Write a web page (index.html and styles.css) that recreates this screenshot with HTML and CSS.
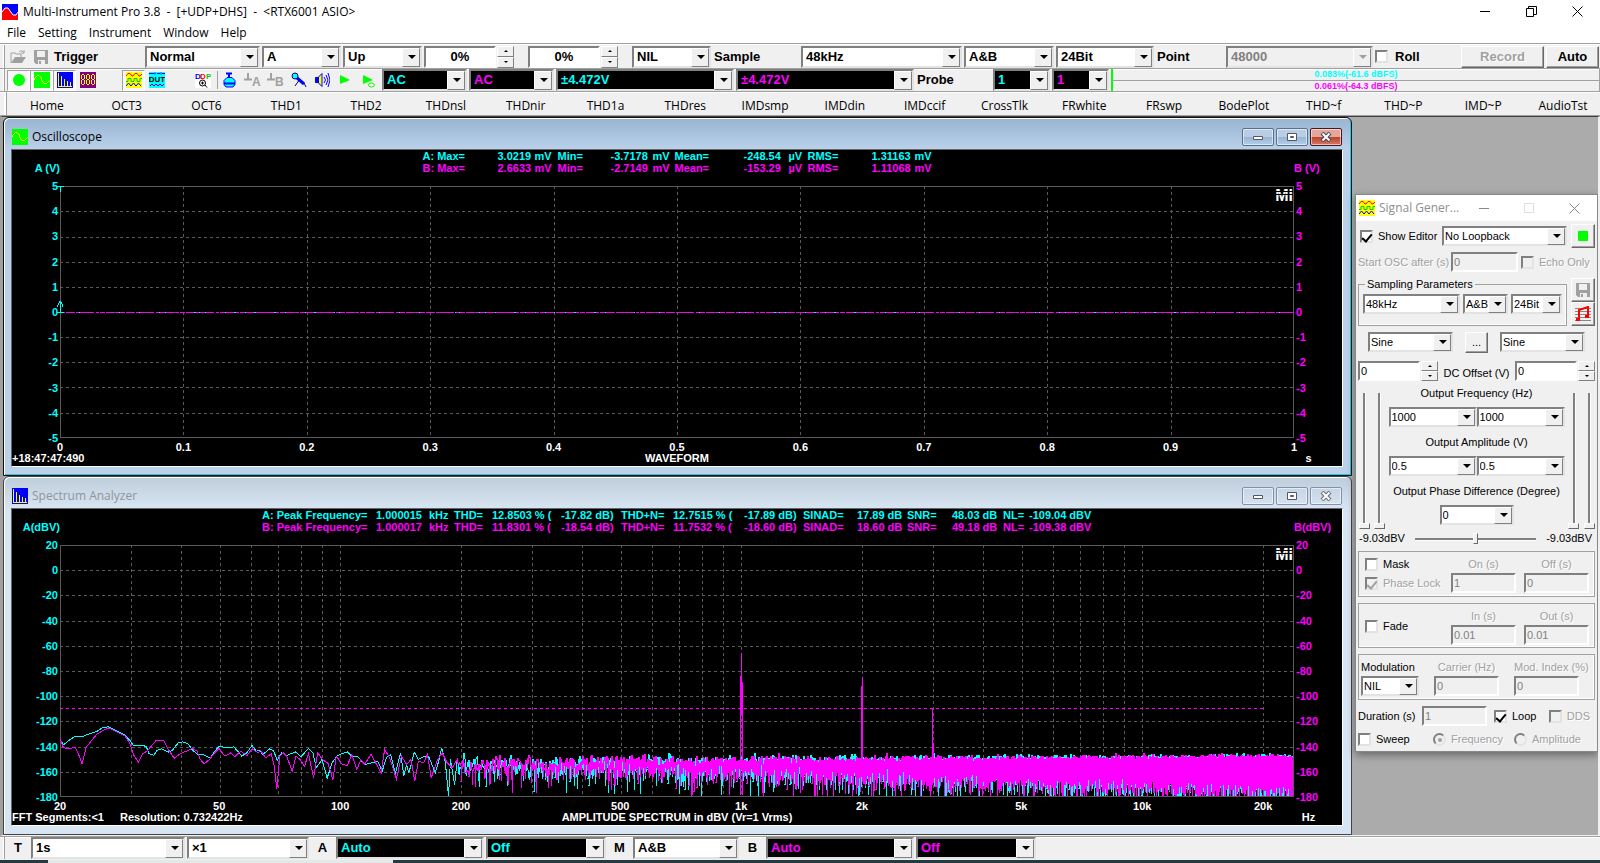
FILE: index.html
```html
<!DOCTYPE html>
<html lang="en">
<head>
<meta charset="utf-8">
<title>Multi-Instrument Pro 3.8</title>
<link rel="stylesheet" href="styles.css">
</head>
<body>
<svg width="0" height="0" class="defs" aria-hidden="true">
  <symbol id="i-scope" viewBox="0 0 16 16"><rect width="16" height="16" fill="#0f0"/><path d="M.5 8V6.500L3.500 3.500H5L7.500 6v2L10 11.500h2.500L15.500 8.500" fill="none" stroke="#ff0"/></symbol>
  <symbol id="i-spec" viewBox="0 0 16 16"><rect width="16" height="16" fill="#00f"/><path d="M1.500 1v13M4.500 4v10M7.500 7v7M10.500 9v5M13.500 10v4M1 14.500h14" stroke="#ff0"/></symbol>
  <symbol id="i-gen" viewBox="0 0 16 16"><rect width="16" height="16" fill="#ff0"/><path d="M0 4l2-2.500h2L6 4h1l2-2.500h2L13 4h1l2-2" fill="none" stroke="#f00"/><path d="M0 9.500h2v-3h3v3h3v-3h3v3h3v-3h2" fill="none" stroke="#0c0"/><path d="M0 14l2.500-3L5 14l2.500-3L10 14l2.500-3L15 14" fill="none" stroke="#00f"/></symbol>
  <symbol id="i-save" viewBox="0 0 16 16"><path d="M1 1h14v14H3l-2-2z" fill="#a0a0a0"/><path d="M4 2h8v6H4z" fill="#f0f0f0"/><path d="M5 11h7v4H5z" fill="#f0f0f0"/><path d="M6 12h2v3H6z" fill="#a0a0a0"/></symbol>
</svg>
<div class="app">
  <header class="titlebar">
    <svg width="16" height="16"><rect width="16" height="16" fill="#f00"/><path d="M0 0h16v10l-2 1h-3L8 7 6 4H3L0 7z" fill="#00f"/><path d="M0 8l3-4h3l5 7h3l2-3" fill="none" stroke="#fff" stroke-width="1"/></svg>
    <span class="caption">Multi-Instrument Pro 3.8 &nbsp;- &nbsp;[+UDP+DHS] &nbsp;- &nbsp;&lt;RTX6001 ASIO&gt;</span>
    <span class="syscmds">
      <button aria-label="Minimize"><svg width="11" height="11"><path d="M0 5.500h10" stroke="#000"/></svg></button>
      <button aria-label="Restore"><svg width="11" height="11" fill="none" stroke="#000"><path d="M.5 2.500h7v8h-7zM2.500 2V.5h8v8H8"/></svg></button>
      <button aria-label="Close"><svg width="11" height="11" stroke="#000"><path d="M.5.5l10 10M10.500.5l-10 10"/></svg></button>
    </span>
  </header>
  <nav class="menu"><button>File</button><button>Setting</button><button>Instrument</button><button>Window</button><button>Help</button></nav>

  <section class="bar row1">
    <i class="grip"></i>
    <button class="flat" aria-label="Open"><svg width="16" height="16"><path d="M1 14V4h4l1 1h5v3" fill="none" stroke="#a0a0a0"/><path d="M1 14l4-6h11l-4 6z" fill="#a0a0a0"/><path d="M9 3c2-2 4-1 5 1M14 1v3h-3" fill="none" stroke="#a0a0a0"/></svg></button>
    <button class="flat" aria-label="Save"><svg width="16" height="16"><use href="#i-save"/></svg></button>
    <span class="lbl w90l">Trigger</span>
    <span class="combo w115"><select aria-label="Trigger mode"><option>Normal</option></select></span>
    <span class="combo w79"><select aria-label="Trigger source"><option>A</option></select></span>
    <span class="combo w79"><select aria-label="Trigger edge"><option>Up</option></select></span>
    <span class="num"><input aria-label="Trigger level" value="0%"><span class="spin"><button aria-label="Up"></button><button aria-label="Down"></button></span></span>
    <span class="num second"><input aria-label="Trigger delay" value="0%"><span class="spin"><button aria-label="Up"></button><button aria-label="Down"></button></span></span>
    <span class="combo w79 gapped"><select aria-label="Filter"><option>NIL</option></select></span>
    <span class="lbl w86">Sample</span>
    <span class="combo w161"><select aria-label="Sample rate"><option>48kHz</option></select></span>
    <span class="combo w90"><select aria-label="Channels"><option>A&amp;B</option></select></span>
    <span class="combo w98"><select aria-label="Bits"><option>24Bit</option></select></span>
    <span class="lbl w68">Point</span>
    <span class="combo w147 off"><select aria-label="Points" disabled><option>48000</option></select></span>
    <label class="check roll"><input type="checkbox">Roll</label>
    <button class="push rec" disabled>Record</button>
    <button class="push auto">Auto</button>
  </section>

  <section class="bar row2">
    <i class="grip"></i>
    <span class="tools">
      <button class="tool on" aria-label="Run"><svg width="16" height="16"><circle cx="8" cy="8" r="6" fill="#0f0"/></svg></button>
      <button class="tool on" aria-label="Oscilloscope"><svg width="16" height="16"><use href="#i-scope"/></svg></button>
      <button class="tool on" aria-label="Spectrum Analyzer"><svg width="16" height="16"><use href="#i-spec"/></svg></button>
      <button class="tool" aria-label="Multimeter"><svg width="16" height="16"><rect width="16" height="16" fill="#800080"/><path d="M2 2.500h2M2 7.500h2M2 12.500h2M1.500 3v4M4.500 3v4M1.500 8v4M4.500 8v4M7 2.500h2M7 7.500h2M7 12.500h2M6.500 3v4M9.500 3v4M6.500 8v4M9.500 8v4M12 2.500h2M12 7.500h2M12 12.500h2M11.500 3v4M14.500 3v4M11.500 8v4M14.500 8v4" fill="none" stroke="#ff0"/></svg></button>
      <button class="tool on siggen" aria-label="Signal Generator"><svg width="16" height="16"><use href="#i-gen"/></svg></button>
      <button class="tool" aria-label="DUT"><svg width="16" height="16"><rect width="16" height="16" fill="#0ff"/><path d="M0 1.500h5M6 .5v2M8 1.500h3M12 .5v2M13 1.500h3M1 14l2-2 2 2 2-2 2 2 2-2 2 2 2-2" fill="none" stroke="#00f"/><text x="8" y="10" class="tiny" text-anchor="middle">DUT</text></svg></button>
      <button class="tool ddp" aria-label="DDP viewer"><svg width="16" height="16"><rect width="16" height="16" fill="#fff"/><text x="0" y="7" class="tiny" fill="#00f">D</text><text x="5" y="7" class="tiny" fill="#f00">D</text><text x="11" y="7" class="tiny" fill="#0c0">P</text><circle cx="7.500" cy="11" r="3" fill="none" stroke="#000"/><path d="M6 11h3M7.500 9.500v3M10 13l2 2.500" stroke="#000"/></svg></button>
      <i class="sep"></i>
      <button class="tool" aria-label="Calibrate"><svg width="16" height="16"><path d="M4 1.500h6M7 1v5" stroke="#00f" stroke-width="2"/><path d="M5 5.500h5l3 3v4l-2 2.500H4l-2-2.500v-4z" fill="#0ff" stroke="#00f"/><path d="M2 11.500h11" stroke="#00f" stroke-width="2"/></svg></button>
      <button class="tool" aria-label="Zero A"><svg width="18" height="16"><path d="M0 7.500h8M4 1v7" stroke="#a0a0a0" stroke-width="2"/><text x="8" y="14" class="mark">A</text></svg></button>
      <button class="tool" aria-label="Zero B"><svg width="18" height="16"><path d="M0 7.500h8M4 1v7" stroke="#a0a0a0" stroke-width="2"/><text x="8" y="14" class="mark">B</text></svg></button>
      <button class="tool" aria-label="Microphone"><svg width="16" height="16"><path d="M5 5l8 7" stroke="#00f" stroke-width="3"/><circle cx="4" cy="4" r="3" fill="#0ff" stroke="#008"/><path d="M9 7l-5 7M13 11l2 4" stroke="#008"/></svg></button>
      <button class="tool" aria-label="Speaker"><svg width="16" height="16"><path d="M1.500 5.500h3v5h-3z" fill="#00f" stroke="#00f"/><path d="M4.500 5L8 1.500v13L4.500 11z" fill="#ff0" stroke="#00f"/><path d="M10 5l1.500 3L10 11M12 3l2 5-2 5M14 1l2 7-2 7" fill="none" stroke="#00f"/></svg></button>
      <button class="tool" aria-label="Play"><svg width="16" height="16"><path d="M3 3l10 5-10 4z" fill="#0f0"/></svg></button>
      <button class="tool" aria-label="Play loop"><svg width="16" height="16"><path d="M3 3l10 5-10 4z" fill="#0f0"/><ellipse cx="11.500" cy="13" rx="3" ry="2" fill="#f0f0f0" stroke="#0f0"/></svg></button>
    </span>
    <span class="combo w85 dark a"><select aria-label="Coupling A"><option>AC</option></select></span>
    <span class="combo w85 dark b"><select aria-label="Coupling B"><option>AC</option></select></span>
    <span class="combo w178 dark a"><select aria-label="Range A"><option>±4.472V</option></select></span>
    <span class="combo w178 dark b"><select aria-label="Range B"><option>±4.472V</option></select></span>
    <span class="lbl w75">Probe</span>
    <span class="combo w57 dark a"><select aria-label="Probe A"><option>1</option></select></span>
    <span class="combo w57 dark b"><select aria-label="Probe B"><option>1</option></select></span>
    <span class="meters"><span class="a">0.083%(-61.6 dBFS)</span><span class="b">0.061%(-64.3 dBFS)</span></span>
  </section>

  <nav class="bar presets">
    <button>Home</button><button>OCT3</button><button>OCT6</button><button>THD1</button><button>THD2</button><button>THDnsl</button><button>THDnir</button><button>THD1a</button><button>THDres</button><button>IMDsmp</button><button>IMDdin</button><button>IMDccif</button><button>CrossTlk</button><button>FRwhite</button><button>FRswp</button><button>BodePlot</button><button>THD~f</button><button>THD~P</button><button>IMD~P</button><button>AudioTst</button>
  </nav>

  <main class="workspace">
    <div class="views">
      <section class="win active">
        <header><svg width="16" height="16"><use href="#i-scope"/></svg><h2>Oscilloscope</h2>
          <span class="winbtns"><button aria-label="Minimize"><svg width="12" height="10"><path d="M1.500 4.500h9v3h-9z" fill="#fff" stroke="#556"/></svg></button><button aria-label="Maximize"><svg width="12" height="10"><path d="M1.500 1.500h9v7h-9z" fill="#fff" stroke="#556"/><path d="M4.500 4.500h3v1h-3z" fill="none" stroke="#556"/></svg></button><button class="x" aria-label="Close"><svg width="12" height="10"><path d="M2 1l8 8M10 1L2 9" stroke="#445" stroke-width="4"/><path d="M2.500 1.500l7 7M9.500 1.500l-7 7" stroke="#fff" stroke-width="2"/></svg></button></span></header>
        <div class="screen">
          <div class="top"><span class="unit a">A (V)</span>
            <div class="stats osc">
              <div class="a"><span>A: Max=</span><span>3.0219</span><span>mV</span><span>Min=</span><span>-3.7178</span><span>mV</span><span>Mean=</span><span>-248.54</span><span>µV</span><span>RMS=</span><span>1.31163</span><span>mV</span></div>
              <div class="b"><span>B: Max=</span><span>2.6633</span><span>mV</span><span>Min=</span><span>-2.7149</span><span>mV</span><span>Mean=</span><span>-153.29</span><span>µV</span><span>RMS=</span><span>1.11068</span><span>mV</span></div>
            </div><span class="unit b">B (V)</span></div>
          <div class="yaxis a"><span>5</span><span>4</span><span>3</span><span>2</span><span>1</span><span>0</span><span>-1</span><span>-2</span><span>-3</span><span>-4</span><span>-5</span></div>
          <div class="plot"><svg id="osc" viewBox="0 0 1234 253" preserveAspectRatio="none"></svg><b class="brand">MI</b></div>
          <div class="yaxis b"><span>5</span><span>4</span><span>3</span><span>2</span><span>1</span><span>0</span><span>-1</span><span>-2</span><span>-3</span><span>-4</span><span>-5</span></div>
          <div class="xaxis" data-ticks="0:0 0.1:10 0.2:20 0.3:30 0.4:40 0.5:50 0.6:60 0.7:70 0.8:80 0.9:90 1:100"></div>
          <div class="foot"><span>+18:47:47:490</span><span>WAVEFORM</span><span class="xunit">s</span></div>
        </div>
      </section>
      <section class="win">
        <header><svg width="16" height="16"><use href="#i-spec"/></svg><h2>Spectrum Analyzer</h2>
          <span class="winbtns"><button aria-label="Minimize"><svg width="12" height="10"><path d="M1.500 4.500h9v3h-9z" fill="#fff" stroke="#556"/></svg></button><button aria-label="Maximize"><svg width="12" height="10"><path d="M1.500 1.500h9v7h-9z" fill="#fff" stroke="#556"/><path d="M4.500 4.500h3v1h-3z" fill="none" stroke="#556"/></svg></button><button aria-label="Close"><svg width="12" height="10"><path d="M2 1l8 8M10 1L2 9" stroke="#667" stroke-width="4"/><path d="M2.500 1.500l7 7M9.500 1.500l-7 7" stroke="#fff" stroke-width="2"/></svg></button></span></header>
        <div class="screen">
          <div class="top"><span class="unit a">A(dBV)</span>
            <div class="stats spec">
              <div class="a"><span>A: Peak Frequency=</span><span>1.000015</span><span>kHz</span><span>THD=</span><span>12.8503 % (</span><span>-17.82 dB)</span><span>THD+N=</span><span>12.7515 % (</span><span>-17.89 dB)</span><span>SINAD=</span><span>17.89 dB</span><span>SNR=</span><span>48.03 dB</span><span>NL=</span><span>-109.04 dBV</span></div>
              <div class="b"><span>B: Peak Frequency=</span><span>1.000017</span><span>kHz</span><span>THD=</span><span>11.8301 % (</span><span>-18.54 dB)</span><span>THD+N=</span><span>11.7532 % (</span><span>-18.60 dB)</span><span>SINAD=</span><span>18.60 dB</span><span>SNR=</span><span>49.18 dB</span><span>NL=</span><span>-109.38 dBV</span></div>
            </div><span class="unit b">B(dBV)</span></div>
          <div class="yaxis a"><span>20</span><span>0</span><span>-20</span><span>-40</span><span>-60</span><span>-80</span><span>-100</span><span>-120</span><span>-140</span><span>-160</span><span>-180</span></div>
          <div class="plot"><svg id="spec" viewBox="0 0 1234 252" preserveAspectRatio="none"></svg><b class="brand">MI</b></div>
          <div class="yaxis b"><span>20</span><span>0</span><span>-20</span><span>-40</span><span>-60</span><span>-80</span><span>-100</span><span>-120</span><span>-140</span><span>-160</span><span>-180</span></div>
          <div class="xaxis" data-ticks="20:0 50:12.9 100:22.7 200:32.5 500:45.4 1k:55.2 2k:65 5k:77.9 10k:87.7 20k:97.5"></div>
          <div class="foot"><span class="two"><span>FFT Segments:&lt;1</span><span>Resolution: 0.732422Hz</span></span><span>AMPLITUDE SPECTRUM in dBV (Vr=1 Vrms)</span><span class="xunit">Hz</span></div>
        </div>
      </section>
    </div>

    <aside class="gen-win">
      <header><svg width="16" height="16"><use href="#i-gen"/></svg><span class="name">Signal Gener...</span>
        <button aria-label="Minimize"><svg width="11" height="11"><path d="M0 5.500h10" stroke="#888"/></svg></button><button aria-label="Maximize" disabled><svg width="11" height="11"><path d="M.5.5h9v9h-9z" fill="none" stroke="#ddd"/></svg></button><button aria-label="Close"><svg width="11" height="11" stroke="#888"><path d="M.5.5l10 10M10.500.5l-10 10"/></svg></button></header>
      <form class="gen">
        <div class="g-top">
          <label class="check"><input type="checkbox" checked>Show Editor</label>
          <span class="combo grow"><select aria-label="Loopback"><option>No Loopback</option></select></span>
          <button type="button" class="sq" aria-label="Run generator"><svg width="12" height="12"><rect x="1" y="1" width="10" height="10" fill="#0f0"/></svg></button>
        </div>
        <div class="g-start"><label for="start" class="dis">Start OSC after (s)</label><input id="start" class="field w67" value="0" disabled><label class="check dis"><input type="checkbox" disabled>Echo Only</label></div>
        <div class="g-samp">
          <fieldset><legend>Sampling Parameters</legend><span class="combo grow"><select aria-label="Rate"><option>48kHz</option></select></span><span class="combo w45"><select aria-label="Channel"><option>A&amp;B</option></select></span><span class="combo w51"><select aria-label="Bit depth"><option>24Bit</option></select></span></fieldset>
          <span class="pair"><button type="button" class="sq" aria-label="Save" disabled><svg width="16" height="16"><use href="#i-save"/></svg></button><button type="button" class="sq" aria-label="Score"><svg width="16" height="16"><path d="M0 2.500h16M0 5.500h16M0 8.500h16M0 11.500h16M0 14.500h16" stroke="#888"/><path d="M4 13V4l9-3v9" fill="none" stroke="#f00" stroke-width="2"/><path d="M1 12h4v3H1zM10 9h4v3h-4z" fill="#f00"/></svg></button></span>
        </div>
        <div class="g-wave"><span class="combo w85"><select aria-label="Waveform A"><option>Sine</option></select></span><button type="button" class="push dots">...</button><span class="combo w85"><select aria-label="Waveform B"><option>Sine</option></select></span></div>
        <div class="g-dc"><input class="field" aria-label="DC Offset A" value="0"><span class="spin"><button type="button" aria-label="Up"></button><button type="button" aria-label="Down"></button></span><span class="mid">DC Offset (V)</span><input class="field" aria-label="DC Offset B" value="0"><span class="spin"><button type="button" aria-label="Up"></button><button type="button" aria-label="Down"></button></span></div>
        <div class="g-out">
          <input type="range" class="vert" aria-label="Amplitude A coarse" value="0"><input type="range" class="vert" aria-label="Amplitude A fine" value="0">
          <div class="out-mid">
            <span>Output Frequency (Hz)</span>
            <div><span class="combo"><select aria-label="Frequency A"><option>1000</option></select></span><span class="combo"><select aria-label="Frequency B"><option>1000</option></select></span></div>
            <span>Output Amplitude (V)</span>
            <div><span class="combo"><select aria-label="Amplitude A"><option>0.5</option></select></span><span class="combo"><select aria-label="Amplitude B"><option>0.5</option></select></span></div>
            <span>Output Phase Difference (Degree)</span>
            <div><span class="combo w74"><select aria-label="Phase"><option>0</option></select></span></div>
          </div>
          <input type="range" class="vert" aria-label="Amplitude B fine" value="0"><input type="range" class="vert" aria-label="Amplitude B coarse" value="0">
        </div>
        <div class="g-bal"><span>-9.03dBV</span><input type="range" class="horz" aria-label="Balance" value="50"><span>-9.03dBV</span></div>
        <div class="box g3">
          <label class="check"><input type="checkbox">Mask</label><label for="on" class="dis">On (s)</label><label for="offs" class="dis">Off (s)</label>
          <label class="check dis"><input type="checkbox" checked disabled>Phase Lock</label><input id="on" class="field" value="1" disabled><input id="offs" class="field" value="0" disabled>
        </div>
        <div class="box g3 fade">
          <label class="check"><input type="checkbox">Fade</label><label for="fin" class="dis">In (s)</label><label for="fout" class="dis">Out (s)</label>
          <input id="fin" class="field" value="0.01" disabled><input id="fout" class="field" value="0.01" disabled>
        </div>
        <div class="box g3 mod">
          <label for="mod">Modulation</label><label for="car" class="dis">Carrier (Hz)</label><label for="idx" class="dis">Mod. Index (%)</label>
          <span class="combo"><select id="mod"><option>NIL</option></select></span><input id="car" class="field" value="0" disabled><input id="idx" class="field" value="0" disabled>
        </div>
        <div class="g-dur"><label for="dur">Duration (s)</label><input id="dur" class="field w65" value="1" disabled><label class="check"><input type="checkbox" checked>Loop</label><label class="check dis"><input type="checkbox" disabled>DDS</label></div>
        <div class="g-sweep"><label class="check"><input type="checkbox">Sweep</label><label class="check dis"><input type="radio" name="sw" checked disabled>Frequency</label><label class="check dis"><input type="radio" name="sw" disabled>Amplitude</label></div>
      </form>
    </aside>
  </main>

  <section class="bar bottom">
    <i class="grip"></i>
    <span class="lbl w25">T</span><span class="combo w154"><select aria-label="Sweep time"><option>1s</option></select></span><span class="combo w122"><select aria-label="Time multiplier"><option>×1</option></select></span>
    <span class="lbl w22">A</span><span class="combo w148 dark a"><select aria-label="Scale A"><option>Auto</option></select></span><span class="combo w120 dark a"><select aria-label="Offset A"><option>Off</option></select></span>
    <span class="lbl w22">M</span><span class="combo w106"><select aria-label="View mode"><option>A&amp;B</option></select></span>
    <span class="lbl w22">B</span><span class="combo w148 dark b"><select aria-label="Scale B"><option>Auto</option></select></span><span class="combo w120 dark b"><select aria-label="Offset B"><option>Off</option></select></span>
  </section>
  <div class="desk"><i></i></div>
</div>
<script src="app.js"></script>
</body>
</html>
```
FILE: styles.css
```css
* { box-sizing: border-box; }
body { margin: 0; background: #f0f0f0; color: #000; font: 11px/13px "Liberation Sans", Arial, sans-serif; }
button, input, select { font: inherit; color: inherit; margin: 0; padding: 0; border-radius: 0; }
button { border: 0; background: none; display: flex; align-items: center; justify-content: center; flex: none; }
svg { display: block; flex: none; }
h2 { margin: 0; font-weight: 400; }
.defs { position: absolute; }
.a { color: #0ff; }
.b { color: #f0f; }
.app { height: 100vh; display: flex; flex-direction: column; overflow: hidden; }

.titlebar { height: 23px; flex: none; background: #fff; display: flex; align-items: center; padding-left: 2px; gap: 5px; font: 12px/16px "Open Sans", "Noto Sans", sans-serif; }
.syscmds { margin-left: auto; display: flex; }
.syscmds button { width: 46px; height: 20px; }
.menu { height: 20px; flex: none; background: #fff; display: flex; padding-left: 7px; gap: 12px; font: 12px/18px "Open Sans", "Noto Sans", sans-serif; }

.bar { display: flex; align-items: center; background: #f0f0f0; border-top: 1px solid #a0a0a0; box-shadow: inset 0 1px #fff; gap: 2px; font-weight: 700; font-size: 13px; line-height: 16px; flex: none; padding-left: 3px; }
.row1 { height: 25px; padding-top: 1px; }
.row2 { height: 23px; }
.grip { width: 2px; align-self: stretch; border-right: 1px solid #a0a0a0; background: #fff; flex: none; }
.lbl { padding-left: 1px; flex: none; }
.flat { width: 21px; height: 20px; }
.w90l { width: 90px; } .w115 { width: 115px; } .w79 { width: 79px; } .w86 { width: 86px; } .w161 { width: 161px; }
.w90 { width: 90px; } .w98 { width: 98px; } .w68 { width: 68px; } .w147 { width: 147px; } .w85 { width: 85px; }
.w178 { width: 178px; } .w75 { width: 75px; } .w57 { width: 57px; } .w25 { width: 22px; } .w22 { width: 23px; }
.w154 { width: 154px; } .w122 { width: 122px; } .w148 { width: 148px; } .w120 { width: 120px; } .w106 { width: 106px; }
.w67 { width: 67px; } .w65 { width: 65px; } .w45 { width: 45px; } .w51 { width: 51px; } .w74 { width: 74px; }

.combo { position: relative; display: flex; flex: none; height: 22px; }
.combo select { appearance: none; width: 100%; border: 2px solid; border-color: #808080 #e3e3e3 #e3e3e3 #808080; background: #fff; padding-left: 3px; opacity: 1; color: #000; }
.combo::after { content: ""; position: absolute; right: 2px; top: 2px; bottom: 1px; width: 16px; background: #f0f0f0; border: 1px solid; border-color: #fff #808080 #808080 #fff; pointer-events: none; }
.combo::before { content: ""; position: absolute; z-index: 1; right: 6px; top: calc(50% - 2px); border: 4px solid transparent; border-top-color: #000; border-bottom: 0; pointer-events: none; }
.dark select { background: #000; }
.dark.a select { color: #0ff; }
.dark.b select { color: #f0f; }
.off select { background: #f0f0f0; color: #808080; }
.off::before { border-top-color: #a0a0a0; }
.num { display: flex; width: 90px; flex: none; height: 22px; gap: 1px; }
.num.second { margin-left: 12px; }
.gapped { margin-left: 12px; }
.num input { width: 72px; border: 2px solid; border-color: #808080 #fff #fff #808080; background: #fff; text-align: center; font-weight: 700; }
.spin { width: 17px; display: flex; flex-direction: column; flex: none; }
.spin button { flex: 1; border: 1px solid; border-color: #fff #808080 #808080 #fff; background: #f0f0f0; }
.spin button::before { content: ""; border: 2px solid transparent; border-top: 0; border-bottom-color: #000; }
.spin button:last-child::before { border: 2px solid transparent; border-bottom: 0; border-top-color: #000; }
.push { background: #f0f0f0; border: 1px solid; border-color: #fff #696969 #696969 #fff; box-shadow: inset -1px -1px #a0a0a0; }
.push:disabled { color: #a0a0a0; text-shadow: 1px 1px #fff; }
.rec { width: 83px; height: 22px; margin-left: auto; }
.auto { width: 53px; height: 22px; margin-right: 1px; }
.check { display: flex; align-items: center; gap: 7px; white-space: nowrap; }
.check input { appearance: none; width: 13px; height: 13px; flex: none; background: #fff; border: 2px solid; border-color: #808080 #e3e3e3 #e3e3e3 #808080; display: grid; place-items: center; }
.check input[type=checkbox]:checked::before { content: ""; width: 4px; height: 8px; border: solid #000; border-width: 0 2px 2px 0; transform: rotate(40deg); }
.check input:disabled { background: #f0f0f0; }
.check input[type=checkbox]:disabled::before { border-color: #a0a0a0; }
.check input[type=radio] { border-radius: 50%; }
.check input[type=radio]:checked::before { content: ""; width: 4px; height: 4px; border-radius: 50%; background: #a0a0a0; }

.tools { display: flex; align-items: center; width: 373px; flex: none; }
.tool { width: 23px; height: 21px; }
.tool.on { background: #f8f8f8; border: 1px solid; border-color: #a0a0a0 #fff #fff #a0a0a0; }
.siggen, .ddp { margin-left: 23px; }
.sep { width: 1px; height: 18px; background: #a0a0a0; margin: 0 0 0 3px; flex: none; }
.tiny { font: 700 8px "Liberation Sans", sans-serif; }
.mark { font: 700 12px "Liberation Sans", sans-serif; fill: #a0a0a0; }
.meters { flex: 1; display: grid; grid-template-rows: 11px 11px; font-size: 9px; line-height: 10px; text-align: center; border-right: 1px solid #a0a0a0; }
.meters span { border-left: 2px solid #0f0; }
.meters .b { border-top: 1px solid #a0a0a0; }
.presets { height: 25px; gap: 0; padding-left: 4px; font: 12px/16px "Open Sans", "Noto Sans", sans-serif; border-bottom: 1px solid #a0a0a0; }
.presets button { width: 5%; min-width: 0; padding-top: 4px; }
.presets::before { content: ""; width: 2px; align-self: stretch; border-right: 1px solid #a0a0a0; background: #fff; flex: none; }

.workspace { flex: 1; min-height: 0; background: #ababab; border: solid; border-width: 1px 2px 1px 3px; border-color: #404040 #f0f0f0 #f0f0f0 #a0a0a0; display: flex; align-items: flex-start; gap: 3px; overflow: hidden; }
.views { flex: 1; min-width: 0; height: 100%; display: flex; flex-direction: column; }
.win { flex: 1; min-height: 0; display: flex; flex-direction: column; border: 1px solid #444; border-radius: 6px 6px 0 0; padding: 0 8px 8px 7px; background: linear-gradient(#bfcddb, #d7e4f2 31px); box-shadow: inset 1px 1px #fff; }
.win.active { background: linear-gradient(#99b4d1, #b9d1ea 31px); border-color: #111; box-shadow: inset 1px 1px #fff, inset -1px -1px #20c8e8; }
.win > header { height: 31px; flex: none; display: flex; align-items: center; gap: 4px; padding: 6px 1px 0; font: 12px/16px "Open Sans", "Noto Sans", sans-serif; color: #8e959c; }
.win.active > header { color: #000; }
.win h2 { font-size: 12px; }
.winbtns { margin-left: auto; display: flex; gap: 2px; }
.winbtns button { width: 32px; height: 18px; border: 1px solid #8390b0; border-radius: 2px; box-shadow: inset 0 0 0 1px #ffffff88; }
.active .winbtns button { background: linear-gradient(#b9cde4 50%, #98b4d3 50%, #b5cfe9); border-color: #5a7090; }
.active .winbtns .x { background: linear-gradient(#e3a79c 48%, #bf4026 50%, #d27a68); border-color: #4c1621; }
.screen { flex: 1; min-height: 0; background: #000; color: #fff; border: 1px solid; border-color: #666 #fff #fff #666; display: grid; grid-template: 36px minmax(0, 1fr) 14px 14px / 48px minmax(0, 1fr) 48px; font-weight: 700; font-size: 11px; line-height: 12px; }
.top { grid-column: 1 / -1; display: grid; grid-template-columns: 48px 1fr 48px; white-space: nowrap; }
.unit { padding-top: 12px; }
.unit.a { justify-self: end; }
.stats > div { display: grid; justify-content: center; }
.osc > div { grid-template-columns: 75px 37px 23px 53px 42px 22px 69px 45px 19px 64px 43px 17px; }
.spec > div { grid-template-columns: 114px 53px 25px 38px 69px 60px 52px 71px 59px 54px 50px 45px 51px 26px 63px; }
.yaxis { display: flex; flex-direction: column; justify-content: space-between; margin: -6px 2px; text-align: right; }
.yaxis.b { text-align: left; }
.plot { position: relative; min-width: 0; min-height: 0; }
.plot svg { width: 100%; height: 100%; overflow: visible; }
.plot path { fill: none; vector-effect: non-scaling-stroke; shape-rendering: crispEdges; }
.brand { position: absolute; right: 1px; top: 3px; font-size: 16px; line-height: 14px; }
.brand::after { content: ""; position: absolute; inset: 0; background: repeating-linear-gradient(transparent 0 2px, #000 2px 3px); background-size: 100% 8px; background-repeat: no-repeat; }
.xaxis { grid-column: 2; position: relative; }
.xaxis span { position: absolute; top: 3px; width: 40px; margin-left: -20px; text-align: center; }
.foot { grid-column: 1 / -1; display: grid; grid-template-columns: 1fr auto 1fr; white-space: nowrap; }
.two { display: flex; gap: 16px; }
.xunit { justify-self: end; width: 66px; text-align: center; padding-right: 1px; }

.gen-win { width: 243px; flex: none; margin-top: 77px; background: #f0f0f0; border: 1px solid #888; box-shadow: 0 3px 8px #0006; }
.gen-win > header { height: 26px; background: #fff; color: #8e8e8e; display: flex; align-items: center; padding-left: 3px; font: 12px/16px "Open Sans", "Noto Sans", sans-serif; }
.name { flex: 1; padding-left: 4px; white-space: nowrap; }
.gen-win > header button { width: 45px; height: 24px; }
.gen { padding: 3px 2px 5px; display: flex; flex-direction: column; }
.gen .combo { height: 20px; }
.gen .combo select { padding-left: 1px; }
.gen .push { color: #000; }
.field { height: 20px; min-width: 0; border: 2px solid; border-color: #808080 #fff #fff #808080; background: #fff; padding-left: 1px; }
.field:disabled { background: #f0f0f0; color: #808080; }
.dis { color: #a0a0a0; text-shadow: 1px 1px #fff; }
.gen .grow { flex: 1; }
.sq { width: 24px; height: 24px; border: 1px solid; border-color: #fff #696969 #696969 #fff; box-shadow: inset -1px -1px #a0a0a0; }
.g-top { display: flex; align-items: center; gap: 4px; padding-left: 2px; }
.g-top .check { width: 78px; gap: 5px; }
.g-start { display: flex; align-items: center; margin-top: 4px; gap: 3px; white-space: nowrap; }
.g-start > label:first-child { width: 90px; }
.g-start .check { gap: 5px; }
.g-samp { display: flex; gap: 4px; margin-top: 6px; }
.g-samp fieldset { flex: 1; min-width: 0; display: flex; gap: 3px; margin: 0; padding: 3px 4px 5px; border: 1px solid #a0a0a0; box-shadow: inset -1px -1px #fff; }
.g-samp legend { padding: 0 2px; margin-left: 2px; }
.g-wave { display: flex; justify-content: space-between; padding: 0 10px; margin-top: 6px; }
.dots { width: 23px; height: 21px; }
.g-dc { display: grid; grid-template-columns: 62px 17px 1fr 62px 17px; gap: 1px; margin-top: 8px; text-align: center; line-height: 24px; }
.g-dc .spin { height: 20px; }
.g-out { display: flex; justify-content: space-between; margin-top: 2px; }
.out-mid { display: flex; flex-direction: column; align-items: center; width: 176px; height: 142px; }
.out-mid > span { margin-bottom: 7px; }
.out-mid div { display: flex; justify-content: center; width: 100%; margin-bottom: 9px; }
.out-mid .combo { flex: 1; }
.out-mid .w74 { flex: none; }
.vert { appearance: none; writing-mode: vertical-lr; direction: rtl; width: 12px; height: 136px; margin-top: 6px; background: linear-gradient(90deg, transparent 5px, #808080 5px 7px, #fff 7px 8px, transparent 8px); }
.vert::-webkit-slider-thumb { appearance: none; width: 11px; height: 6px; background: #f0f0f0; border: 1px solid; border-color: #fff #696969 #696969 #fff; }
.horz { appearance: none; width: 121px; height: 12px; background: linear-gradient(transparent 5px, #808080 5px 7px, #fff 7px 8px, transparent 8px); }
.horz::-webkit-slider-thumb { appearance: none; width: 5px; height: 11px; background: #f0f0f0; border: 1px solid; border-color: #fff #696969 #696969 #fff; }
.g-bal { display: flex; align-items: center; justify-content: space-between; margin-top: 3px; padding: 0 3px 0 1px; }
.box { border: 1px solid #a0a0a0; box-shadow: inset -1px -1px #fff; margin-top: 6px; padding: 3px 6px 3px; }
.g3 { display: grid; grid-template: 18px 20px / 78px 65px 65px; column-gap: 8px; align-items: center; height: 46px; }
.g3 > .dis:not(.check) { text-align: center; }
.g3 .check { gap: 5px; }
.g3.fade { height: 45px; }
.fade .check { grid-row: 1 / 3; }
.mod { grid-template-columns: 58px 65px 72px; column-gap: 15px; padding-left: 2px; }
.mod label { white-space: nowrap; }
.mod .field:last-child { width: 65px; }
.g-dur { display: flex; align-items: center; margin-top: 6px; }
.g-dur > label:first-child { width: 64px; }
.g-dur .check { margin-left: 7px; gap: 5px; }
.g-dur .check:last-child { margin-left: auto; padding-right: 5px; }
.g-sweep { display: grid; grid-template-columns: 75px 81px 1fr; margin-top: 7px; }
.g-sweep .check { gap: 5px; }

.bottom { height: 24px; padding-bottom: 1px; }
.bottom .lbl { text-align: center; padding-left: 0; }
.desk { height: 3px; background: #253a40; padding-left: 48px; flex: none; }
.desk i { display: block; width: 345px; height: 3px; background: #e4e8e8; }
```
FILE: app.js
```js
const NS = 'http://www.w3.org/2000/svg';
function draw(svg, d, stroke, dash) {
  const p = document.createElementNS(NS, 'path');
  p.setAttribute('d', d);
  p.setAttribute('stroke', stroke);
  if (dash) p.setAttribute('stroke-dasharray', dash);
  svg.appendChild(p);
}
document.querySelectorAll('.xaxis').forEach(axis => {
  axis.dataset.ticks.split(' ').forEach(t => {
    const [label, left] = t.split(':');
    const s = document.createElement('span');
    s.textContent = label;
    s.style.left = left + '%';
    axis.appendChild(s);
  });
});
const GRID = '#5a5a5a';
const W = 1234;

const osc = document.getElementById('osc');
for (let i = 1; i < 10; i++) {
  draw(osc, `M0 ${Math.round(i * 25.3)}.5H${W}`, GRID, '3 3');
  draw(osc, `M${Math.round(i * 123.4)}.5 0V253`, GRID, '3 3');
}
draw(osc, `M.5 .5H${W - 0.5}V252.5H.5Z`, GRID);
draw(osc, `M0 126.5H${W}`, '#0ff', '2 9 3 4 6 5');
draw(osc, `M0 126.5H${W}`, '#f0f', '5 1 8 2 3 1');
draw(osc, 'M-3 .5H4M.5 0V6M-3 126.5H4M.5 126V115M.5 115L-3 121M.5 115L3 121', '#0ff');

const spec = document.getElementById('spec');
const DEC = 401;
const fx = f => DEC * Math.log10(f / 20);
const dy = db => Math.min(251, (20 - db) * 1.26);
for (let i = 1; i < 10; i++) draw(spec, `M0 ${Math.round(i * 25.2)}.5H${W}`, GRID, '3 3');
for (const dec of [10, 100, 1000, 10000]) {
  for (let m = 1; m < 10; m++) {
    const f = dec * m;
    if (f > 20 && f <= 20000) draw(spec, `M${Math.round(fx(f))}.5 0V252`, GRID, '3 3');
  }
}
draw(spec, `M.5 .5H${W - 0.5}V251.5H.5Z`, GRID);

// Low-frequency part of each trace, x and y in thirds of a pixel from the screen edge.
const LOW_A = [180,120,190,136,210,120,222,112,248,112,258,106,290,95,305,85,322,82,340,90,370,105,386,122,398,139,425,137,435,142,443,162,457,167,467,153,480,148,500,158,512,152,530,130,543,127,558,132,572,152,590,166,604,166,624,176,640,152,650,141,680,145,694,142,718,170,732,160,748,138,760,155,770,152,780,165,800,148,812,155,823,183,835,160,850,168,878,157,892,172,915,147,928,160,938,205,955,180,970,236,985,190,1000,168,1030,157,1045,172,1060,170,1080,195,1095,192,1120,185,1133,215,1145,175,1158,165,1172,222,1187,160,1197,228,1205,195,1212,220,1228,158,1240,180,1255,172,1270,170,1290,220,1300,185,1309,145,1320,190,1329,290,1335,180,1347,255,1355,180];
const LOW_B = [180,118,190,144,205,148,225,143,234,162,245,193,257,143,290,103,322,85,345,95,372,110,386,130,398,167,412,188,425,162,437,155,465,122,487,124,500,150,518,176,535,163,572,147,585,155,595,180,606,193,622,180,640,157,650,147,668,170,685,160,697,172,714,155,733,168,748,148,765,160,773,153,788,175,805,163,813,195,821,268,830,170,840,160,850,170,867,215,878,170,890,180,903,200,915,163,930,235,942,160,958,182,972,190,987,240,997,170,1015,195,1030,198,1043,165,1058,210,1070,180,1080,195,1100,165,1130,220,1140,150,1155,175,1175,238,1190,170,1205,195,1218,180,1229,245,1240,185,1255,190,1267,165,1278,235,1295,185,1310,160,1325,190,1340,205,1355,180];

function rng(seed) {
  return () => {
    seed = (seed * 1664525 + 1013904223) >>> 0;
    return (seed + 1) / 4294967297;
  };
}
// Complex noise bins shaped by a Hann window, which correlates neighbouring bins.
function noiseBins(seed) {
  const rand = rng(seed);
  const next = () => {
    const r = Math.sqrt(-Math.log(rand()));
    const t = 2 * Math.PI * rand();
    return [r * Math.cos(t), r * Math.sin(t)];
  };
  let p = next(), c = next();
  return () => {
    const n = next();
    const re = c[0] - (p[0] + n[0]) / 2;
    const im = c[1] - (p[1] + n[1]) / 2;
    p = c;
    c = n;
    return 10 * Math.log10((re * re + im * im) / 1.5);
  };
}
function trace(low, seed) {
  const bin = noiseBins(seed);
  let d = '';
  for (let i = 0; i < low.length; i += 2) {
    const x = Math.max(0, low[i] / 2.958 - 60.8);
    d += `${i ? 'L' : 'M'}${x.toFixed(1)} ${(154.5 + low[i + 1] / 3).toFixed(1)}`;
  }
  const step = 0.732422;
  let f = 20 * Math.pow(10, 398 / DEC);
  for (let col = 398; col < 1233; col++) {
    const end = 20 * Math.pow(10, (col + 1) / DEC);
    let lo = Infinity, hi = -Infinity;
    while (f < end) {
      const level = -153 - Math.min(2, col / 500) + bin();
      lo = Math.min(lo, level);
      hi = Math.max(hi, level);
      f += step;
    }
    if (hi === -Infinity) continue;
    d += `L${col} ${dy(Math.min(hi, -145)).toFixed(1)}V${dy(lo).toFixed(1)}`;
  }
  return d;
}
draw(spec, trace(LOW_A, 77), '#0ff');
draw(spec, trace(LOW_B, 4242), '#f0f');
draw(spec, 'M680.5 250V131M681.5 170V108M682.5 250V137M801.5 230V141M802.5 230V132M872.5 220V164M873.5 220V198', '#f0f');
draw(spec, 'M0 163.5H1203', '#f0f', '3 3');
```
